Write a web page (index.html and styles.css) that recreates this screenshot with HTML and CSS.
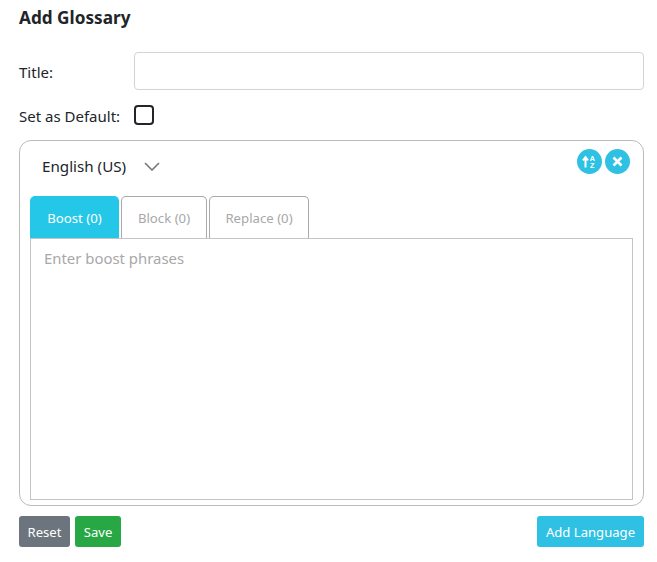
FILE: index.html
```html
<!DOCTYPE html>
<html lang="en">
<head>
    <meta charset="UTF-8">
    <meta name="viewport" content="width=device-width, initial-scale=1.0">
    <title>Add Glossary</title>
    <link rel="stylesheet" href="styles.css">
</head>
<body>
    <div class="container">
        <h1>Add Glossary</h1>

        <div class="row title-row">
            <label class="row-label">Title:</label>
            <input type="text" class="text-input">
        </div>

        <div class="row default-row">
            <label class="row-label">Set as Default:</label>
            <span class="checkbox"></span>
        </div>

        <div class="card">
            <div class="card-head">
                <div class="lang-select">
                    <span>English (US)</span>
                    <svg class="chevron" width="16" height="9" viewBox="0 0 16 9">
                        <path d="M1 1l7 7 7-7" fill="none" stroke="#777" stroke-width="1.6"/>
                    </svg>
                </div>
                <div class="card-actions">
                    <span class="round-btn">
                        <svg width="15" height="15" viewBox="0 0 15 15">
                            <path d="M3.5 13.5V4M1 6.4L3.5 3.2 6 6.4" fill="none" stroke="#fff" stroke-width="2"/>
                            <text x="7.7" y="6.6" class="az">A</text>
                            <text x="7.9" y="14.2" class="az">Z</text>
                        </svg>
                    </span>
                    <span class="round-btn">
                        <svg width="11" height="11" viewBox="0 0 11 11">
                            <path d="M1.5 1.5l8 8M9.5 1.5l-8 8" fill="none" stroke="#fff" stroke-width="2.6"/>
                        </svg>
                    </span>
                </div>
            </div>

            <div class="tabs">
                <div class="tab tab-active">Boost (0)</div>
                <div class="tab tab-block">Block (0)</div>
                <div class="tab tab-replace">Replace (0)</div>
            </div>
            <div class="phrases">Enter boost phrases</div>
        </div>

        <div class="footer">
            <div class="footer-left">
                <button class="button button-grey">Reset</button>
                <button class="button button-green">Save</button>
            </div>
            <button class="button button-blue">Add Language</button>
        </div>
    </div>
</body>
</html>
```

FILE: styles.css
```css
body {
    margin: 0;
    font-family: "Noto Sans", "Open Sans", sans-serif;
    color: #212529;
    background-color: #fff;
}
.container {
    padding: 7px 13px 0 19px;
}
h1 {
    margin: 0 0 23px;
    font-size: 17.2px;
    line-height: 22px;
    font-weight: 700;
}
.row {
    display: flex;
    align-items: center;
}
.row-label {
    width: 115px;
    padding-top: 2px;
    font-size: 15px;
}
.title-row {
    height: 38px;
    margin-bottom: 15px;
}
.text-input {
    flex: 1;
    height: 38px;
    box-sizing: border-box;
    border: 1px solid #ced4da;
    border-radius: 4px;
}
.default-row {
    height: 20px;
    margin-bottom: 15px;
}
.checkbox {
    width: 20px;
    height: 20px;
    box-sizing: border-box;
    border: 2px solid #212529;
    border-radius: 4px;
}
.card {
    height: 366px;
    box-sizing: border-box;
    padding: 0 10px;
    border: 1px solid #bbb;
    border-radius: 12px;
}
.card-head {
    display: flex;
    justify-content: space-between;
    height: 55px;
}
.lang-select {
    display: flex;
    align-items: center;
    gap: 18px;
    height: 49px;
    padding-left: 12px;
    font-size: 15.2px;
}
.chevron {
    margin-top: 1px;
}
.card-actions {
    display: flex;
    gap: 3px;
    padding-top: 8px;
    margin-right: 3px;
}
.round-btn {
    display: flex;
    align-items: center;
    justify-content: center;
    width: 25px;
    height: 25px;
    border-radius: 50%;
    background-color: #2fc1e3;
}
.az {
    font-family: "Liberation Sans", sans-serif;
    font-size: 7.2px;
    font-weight: 700;
    fill: #fff;
}
.tabs {
    display: flex;
    gap: 2px;
}
.tab {
    display: flex;
    align-items: center;
    justify-content: center;
    height: 42px;
    box-sizing: border-box;
    border: 1px solid #aaa;
    border-bottom: none;
    border-radius: 5px 5px 0 0;
    font-size: 13.2px;
    color: #a8a8a8;
}
.tab-active {
    width: 89px;
    border-color: #25c7e8;
    background-color: #25c7e8;
    color: #fff;
}
.tab-block {
    width: 86px;
}
.tab-replace {
    width: 100px;
}
.phrases {
    height: 262px;
    box-sizing: border-box;
    padding: 9px 13px;
    border: 1px solid #c4c4c4;
    font-size: 14.9px;
    color: #a8a8a8;
}
.footer {
    display: flex;
    justify-content: space-between;
    margin-top: 10px;
}
.footer-left {
    display: flex;
    gap: 5px;
}
.button {
    height: 31px;
    padding: 0;
    border: none;
    border-radius: 3px;
    font-family: inherit;
    font-size: 13.1px;
    color: #fff;
}
.button-grey {
    width: 51px;
    background-color: #6c757d;
}
.button-green {
    width: 46px;
    background-color: #28a745;
}
.button-blue {
    width: 107px;
    background-color: #2fc1e3;
}
```
